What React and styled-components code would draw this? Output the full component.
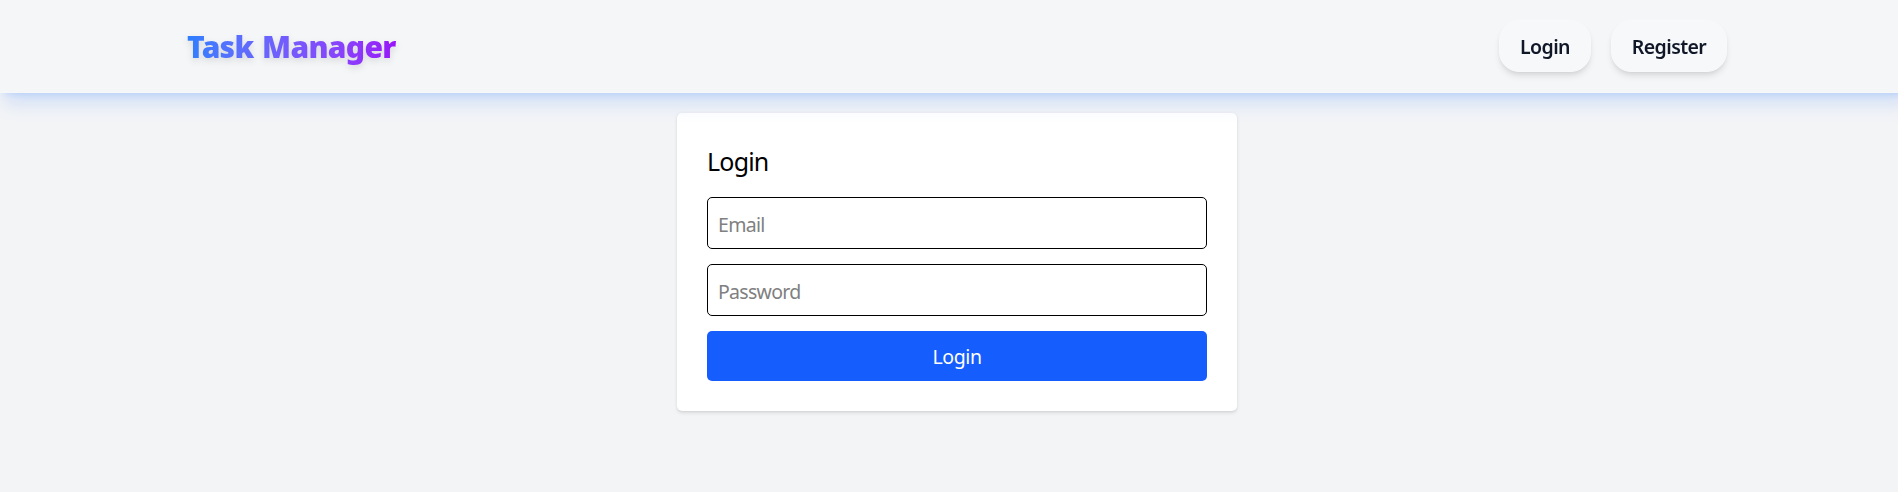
import React from "react";
import styled, { createGlobalStyle } from "styled-components";

const GlobalStyle = createGlobalStyle`
  *, *::before, *::after { box-sizing: border-box; }
  html { overflow: hidden; }
  body {
    margin: 0;
    background: #f3f4f6;
    color: #000;
    font-family: "Noto Sans", "Open Sans", sans-serif;
    font-size: 20px;
    line-height: 30px;
  }
`;

const Page = styled.div`
  width: 1914px;
  min-height: 492px;
  background: #f3f4f6;
`;

const Header = styled.header`
  position: sticky;
  top: 0;
  z-index: 10;
  background: #f5f6f8;
  border-bottom: 1px solid #f6f7f9;
  box-shadow:
    0 12.5px 18.75px -3.75px rgba(43, 127, 255, 0.2),
    0 5px 7.5px -5px rgba(43, 127, 255, 0.2);
`;

const HeaderInner = styled.div`
  display: flex;
  align-items: center;
  justify-content: space-between;
  max-width: 1600px;
  margin: 0 auto;
  padding: 20px 30px;
`;

const Brand = styled.div`
  padding-top: 2px;
  font-size: 30px;
  line-height: 40px;
  font-weight: 900;
  letter-spacing: -0.7px;
  word-spacing: 1.5px;
  color: transparent;
  background: linear-gradient(to right in oklab, #2b7fff, #9810fa);
  background-clip: text;
  filter: drop-shadow(0 3.75px 3.75px rgba(0, 0, 0, 0.12));
`;

const Nav = styled.nav`
  display: flex;
  gap: 20px;
`;

const NavButton = styled.a`
  width: ${(p) => p.$width};
  padding: 11px 0 9px;
  text-align: center;
  border: 1px solid #f8f9fb;
  border-radius: 20px;
  background: #f7f8fa;
  color: #101828;
  font-size: 19.5px;
  font-weight: 600;
  letter-spacing: -0.6px;
  box-shadow:
    0 5px 7.5px -1.25px rgba(0, 0, 0, 0.1),
    0 2.5px 5px -2.5px rgba(0, 0, 0, 0.1);
`;

const Card = styled.form`
  width: 560px;
  margin: 20px auto 0;
  padding: 29px 30px 30px;
  background: #fff;
  border-radius: 5px;
  box-shadow:
    0 1.25px 3.75px rgba(0, 0, 0, 0.1),
    0 1.25px 2.5px -1.25px rgba(0, 0, 0, 0.1);
`;

const Title = styled.h2`
  margin: 0 0 18px;
  padding-top: 2px;
  font-size: 25px;
  line-height: 35px;
  font-weight: 400;
  letter-spacing: -0.8px;
`;

const Field = styled.input`
  display: block;
  width: 100%;
  height: 52px;
  margin: 0 0 15px;
  padding: 11px 10px 9px;
  border: 1px solid #000;
  border-radius: 5px;
  background: transparent;
  font: inherit;
  font-size: 19.5px;
  letter-spacing: -0.7px;
  &::placeholder { color: #808080; opacity: 1; }
`;

const Submit = styled.button`
  display: block;
  width: 100%;
  height: 50px;
  padding: 11px 10px 9px;
  border: 0;
  border-radius: 5px;
  background: #155dfc;
  color: #fff;
  font: inherit;
  font-size: 19.5px;
  letter-spacing: -0.4px;
`;

export default function App() {
  return (
    <>
      <GlobalStyle />
      <Page>
        <Header>
          <HeaderInner>
            <Brand>Task Manager</Brand>
            <Nav>
              <NavButton $width="92px">Login</NavButton>
              <NavButton $width="116px">Register</NavButton>
            </Nav>
          </HeaderInner>
        </Header>
        <Card>
          <Title>Login</Title>
          <Field type="email" placeholder="Email" />
          <Field type="password" placeholder="Password" />
          <Submit type="button">Login</Submit>
        </Card>
      </Page>
    </>
  );
}
